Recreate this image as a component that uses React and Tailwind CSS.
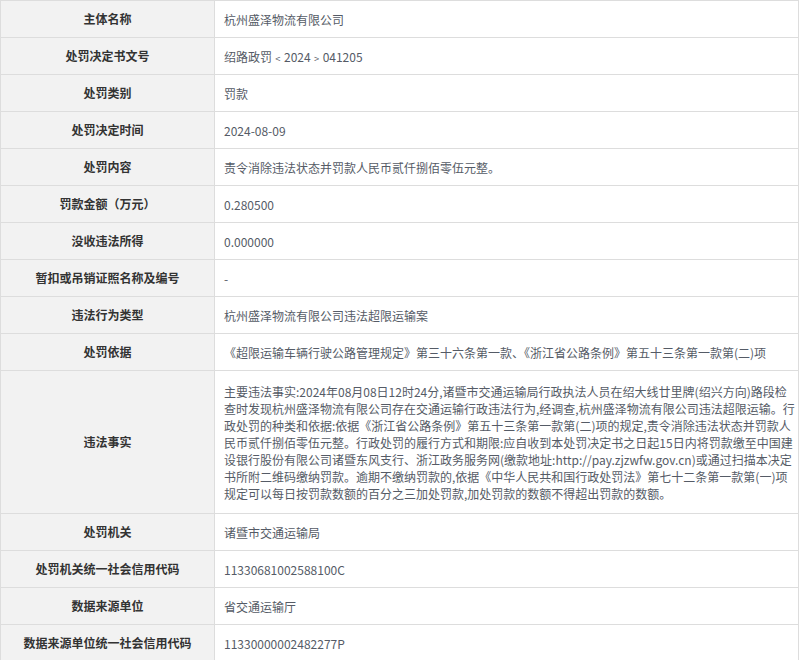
import React from "react";

const rows = [
	["主体名称", "杭州盛泽物流有限公司"],
	["处罚决定书文号", "绍路政罚﹤2024﹥041205"],
	["处罚类别", "罚款"],
	["处罚决定时间", "2024-08-09"],
	["处罚内容", "责令消除违法状态并罚款人民币贰仟捌佰零伍元整。"],
	["罚款金额（万元）", "0.280500"],
	["没收违法所得", "0.000000"],
	["暂扣或吊销证照名称及编号", "-"],
	["违法行为类型", "杭州盛泽物流有限公司违法超限运输案"],
	["处罚依据", "《超限运输车辆行驶公路管理规定》第三十六条第一款、《浙江省公路条例》第五十三条第一款第(二)项"],
	[
		"违法事实",
		"主要违法事实:2024年08月08日12时24分,诸暨市交通运输局行政执法人员在绍大线廿里牌(绍兴方向)路段检查时发现杭州盛泽物流有限公司存在交通运输行政违法行为,经调查,杭州盛泽物流有限公司违法超限运输。行政处罚的种类和依据:依据《浙江省公路条例》第五十三条第一款第(二)项的规定,责令消除违法状态并罚款人民币贰仟捌佰零伍元整。行政处罚的履行方式和期限:应自收到本处罚决定书之日起15日内将罚款缴至中国建设银行股份有限公司诸暨东风支行、浙江政务服务网(缴款地址:http://pay.zjzwfw.gov.cn)或通过扫描本决定书所附二维码缴纳罚款。逾期不缴纳罚款的,依据《中华人民共和国行政处罚法》第七十二条第一款第(一)项规定可以每日按罚款数额的百分之三加处罚款,加处罚款的数额不得超出罚款的数额。",
	],
	["处罚机关", "诸暨市交通运输局"],
	["处罚机关统一社会信用代码", "11330681002588100C"],
	["数据来源单位", "省交通运输厅"],
	["数据来源单位统一社会信用代码", "11330000002482277P"],
];

export default function App() {
	return (
		<div
			className="w-[799px] bg-white text-[12px]"
			style={{ fontFamily: '"Microsoft YaHei", "Noto Sans CJK SC", sans-serif' }}
		>
			<table className="w-full border-collapse">
				<tbody>
					{rows.map(([label, value], i) => (
						<tr key={i} className={i === 10 ? "h-[143px]" : "h-[37px]"}>
							<td className="w-[214px] border border-[#dddddd] bg-[#f2f2f2] text-center font-bold text-[#333]">
								{label}
							</td>
							<td className="border border-[#dddddd] pl-[9px] pr-[1px] py-[2px] text-[#555b66] leading-[17px]">
								{value}
							</td>
						</tr>
					))}
				</tbody>
			</table>
		</div>
	);
}
